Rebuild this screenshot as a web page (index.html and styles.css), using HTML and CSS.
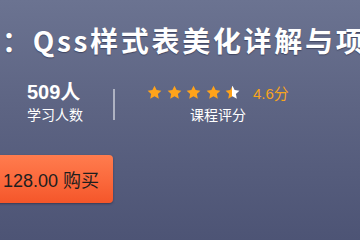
FILE: index.html
```html
<!DOCTYPE html>
<html lang="zh-CN">
<head>
<meta charset="utf-8">
<link rel="stylesheet" href="styles.css">
</head>
<body>
<div class="page">
  <h1 class="title">：Qss样式表美化详解与项目实战</h1>
  <div class="stats">
    <div class="stat learners">
      <div class="stat-num">509人</div>
      <div class="stat-label">学习人数</div>
    </div>
    <div class="divider"></div>
    <div class="stat rating">
      <div class="rating-row">
        <span class="stars">
          <svg class="star" viewBox="0 0 24 24"><path d="M12 1l3.4 7.1 7.6.9-5.6 5.2 1.5 7.6L12 18l-6.9 3.8 1.5-7.6L1 9l7.6-.9z" fill="#ffa31a"/></svg>
          <svg class="star" viewBox="0 0 24 24"><path d="M12 1l3.4 7.1 7.6.9-5.6 5.2 1.5 7.6L12 18l-6.9 3.8 1.5-7.6L1 9l7.6-.9z" fill="#ffa31a"/></svg>
          <svg class="star" viewBox="0 0 24 24"><path d="M12 1l3.4 7.1 7.6.9-5.6 5.2 1.5 7.6L12 18l-6.9 3.8 1.5-7.6L1 9l7.6-.9z" fill="#ffa31a"/></svg>
          <svg class="star" viewBox="0 0 24 24"><path d="M12 1l3.4 7.1 7.6.9-5.6 5.2 1.5 7.6L12 18l-6.9 3.8 1.5-7.6L1 9l7.6-.9z" fill="#ffa31a"/></svg>
          <svg class="star" viewBox="0 0 24 24"><defs><linearGradient id="half"><stop offset="50%" stop-color="#ffa31a"/><stop offset="50%" stop-color="#ffffff"/></linearGradient></defs><path d="M12 1l3.4 7.1 7.6.9-5.6 5.2 1.5 7.6L12 18l-6.9 3.8 1.5-7.6L1 9l7.6-.9z" fill="url(#half)"/></svg>
        </span>
        <span class="score">4.6分</span>
      </div>
      <div class="stat-label">课程评分</div>
    </div>
  </div>
  <button class="buy">128.00 购买</button>
</div>
</body>
</html>
```
FILE: styles.css
```css
html, body {
  margin: 0;
  padding: 0;
}
body {
  width: 360px;
  height: 240px;
  overflow: hidden;
  background: linear-gradient(180deg, #6b7391 0%, #5d6483 45%, #4d5475 100%);
  font-family: "Liberation Sans", "Noto Sans CJK SC", sans-serif;
  color: #fff;
}
.page {
  padding-top: 23px;
}
.title {
  margin: 0 0 0 2px;
  font-family: "Noto Sans CJK SC", sans-serif;
  font-size: 28px;
  font-weight: 700;
  line-height: 34px;
  letter-spacing: 2.7px;
  white-space: nowrap;
  color: #fff;
  text-shadow: 0 1px 1px rgba(40, 45, 70, 0.6);
}
.stats {
  display: flex;
  align-items: center;
  margin-top: 23px;
  padding-left: 27px;
}
.stat {
  display: flex;
  flex-direction: column;
  align-items: center;
}
.learners {
  width: 56px;
  align-items: flex-start;
}
.stat-num {
  font-size: 20px;
  font-weight: 700;
  line-height: 24px;
}
.stat-label {
  font-size: 14px;
  line-height: 18px;
  margin-top: 1px;
  font-family: "Noto Sans CJK SC", sans-serif;
}
.divider {
  width: 2px;
  height: 31px;
  background: #aeb2c2;
  margin-left: 30px;
  margin-right: 32px;
  align-self: flex-start;
  margin-top: 9px;
}
.rating-row {
  display: flex;
  align-items: center;
  height: 24px;
}
.stars {
  display: flex;
  gap: 4.5px;
}
.star {
  width: 15px;
  height: 15px;
  display: block;
}
.score {
  color: #f7a41c;
  font-size: 15px;
  margin-left: 13px;
}
.rating .stat-label {
  margin-top: 1px;
}
.buy {
  display: block;
  margin: 32px 0 0 -8px;
  width: 121px;
  height: 48px;
  border: 0;
  border-radius: 4px;
  background: linear-gradient(180deg, #ff7c4e 0%, #fb6a3d 50%, #f4562a 100%);
  box-shadow: 0 1px 2px rgba(30, 30, 50, 0.5);
  color: #1e1e1e;
  font-family: "Liberation Sans", "Noto Sans CJK SC", sans-serif;
  font-size: 18px;
  text-align: left;
  padding: 0 0 0 11px;
  white-space: nowrap;
}
```
